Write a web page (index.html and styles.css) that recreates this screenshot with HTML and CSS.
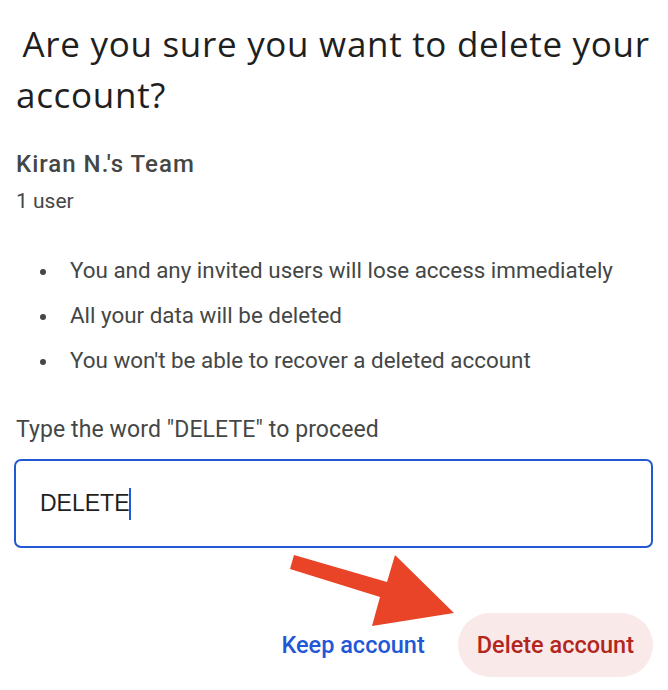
FILE: index.html
```html
<!DOCTYPE html>
<html>
<head>
<meta charset="utf-8">
<link rel="stylesheet" href="styles.css">
</head>
<body>
<div class="dialog">
  <h1 class="title">&thinsp;Are you sure you want to delete your account?</h1>
  <div class="team">
    <div class="team-name">Kiran N.'s Team</div>
    <div class="team-users">1 user</div>
  </div>
  <ul class="consequences">
    <li>You and any invited users will lose access immediately</li>
    <li>All your data will be deleted</li>
    <li>You won't be able to recover a deleted account</li>
  </ul>
  <label class="confirm-label" for="confirm">Type the word "DELETE" to proceed</label>
  <div class="field">
    <span class="field-value">DELETE</span><span class="caret"></span>
  </div>
  <div class="actions">
    <button class="btn btn-keep">Keep account</button>
    <button class="btn btn-delete">Delete account</button>
  </div>
  <svg class="arrow" width="668" height="690" viewBox="0 0 668 690">
    <polygon points="294,555 387,582 395,555 454,613 372,626 380,597 290,569" fill="#e94428"/>
  </svg>
</div>
</body>
</html>
```
FILE: styles.css
```css
html, body {
  margin: 0;
  padding: 0;
  background: #ffffff;
}
.dialog {
  position: relative;
  width: 668px;
  height: 690px;
  box-sizing: border-box;
  padding: 0 15px 0 14px;
  font-family: Roboto, "Liberation Sans", sans-serif;
  color: #444746;
  overflow: hidden;
}
.title {
  margin: 0;
  padding: 18px 0 0 2px;
  font-family: "Open Sans", Roboto, sans-serif;
  font-weight: 400;
  font-size: 35px;
  line-height: 51px;
  color: #1f1f1f;
  letter-spacing: 0.7px;
}
.team {
  margin-top: 29px;
  padding-left: 2px;
}
.team-name {
  font-size: 24px;
  font-weight: 500;
  line-height: 30px;
  letter-spacing: 1px;
  color: #444746;
}
.team-users {
  margin-top: 7px;
  font-size: 21px;
  line-height: 30px;
  color: #444746;
}
.consequences {
  list-style: none;
  margin: 32px 0 0 0;
  padding: 0;
  font-size: 22.4px;
  line-height: 45px;
  color: #444746;
}
.consequences li {
  display: flex;
  align-items: center;
}
.consequences li::before {
  content: "";
  flex: none;
  width: 6px;
  height: 6px;
  border-radius: 50%;
  background: #444746;
  margin-left: 26px;
  margin-right: 24px;
  margin-top: 2px;
}
.confirm-label {
  display: block;
  margin-top: 32px;
  padding-left: 2px;
  font-size: 23px;
  line-height: 30px;
  letter-spacing: 0.1px;
  color: #444746;
}
.field {
  margin-top: 14px;
  height: 89px;
  box-sizing: border-box;
  border: 2.5px solid #2458d3;
  border-radius: 7px;
  display: flex;
  align-items: center;
  padding-left: 24px;
}
.field-value {
  font-family: "Liberation Sans", Arial, sans-serif;
  font-size: 23px;
  color: #1f1f1f;
}
.caret {
  display: inline-block;
  width: 2px;
  height: 32px;
  background: #2458d3;
}
.actions {
  display: flex;
  justify-content: flex-end;
  align-items: center;
  gap: 14px;
  margin-top: 65px;
}
.btn {
  border: none;
  background: transparent;
  font-family: Roboto, "Liberation Sans", sans-serif;
  font-size: 23.5px;
  font-weight: 500;
  height: 64px;
  border-radius: 32px;
  padding: 0 19px;
  cursor: pointer;
}
.btn-keep {
  color: #1f57d6;
}
.btn-delete {
  background: #f9eae9;
  color: #b3261e;
}
.arrow {
  position: absolute;
  left: 0;
  top: 0;
  pointer-events: none;
}
```
